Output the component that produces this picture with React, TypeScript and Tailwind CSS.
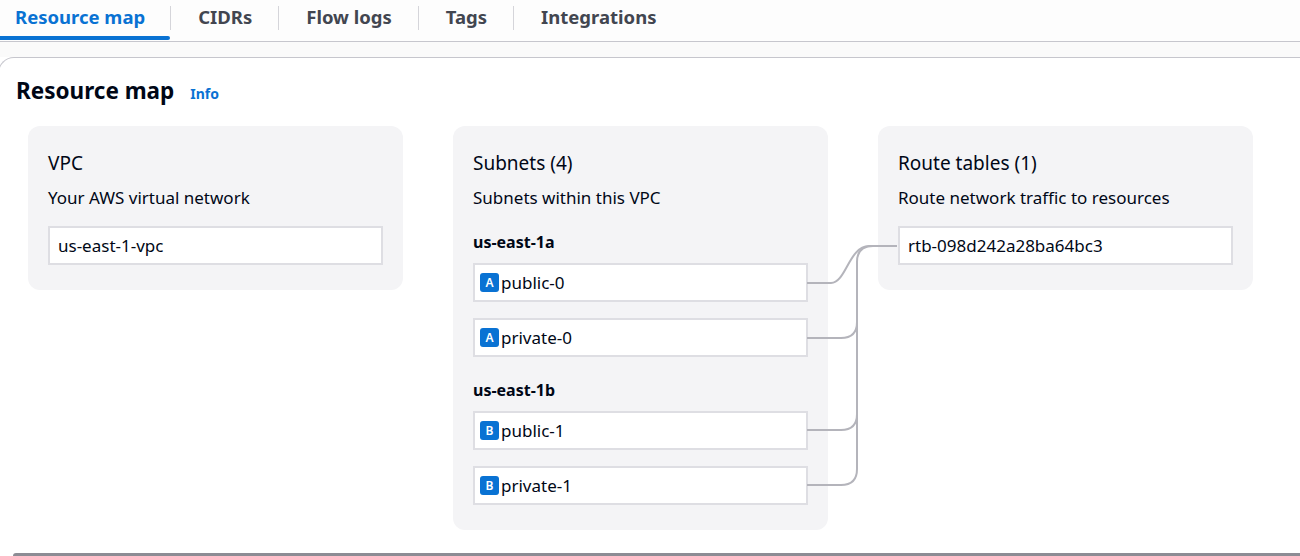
import * as React from 'react';

const tabs = ['Resource map', 'CIDRs', 'Flow logs', 'Tags', 'Integrations'];

const Badge = ({ letter }: { letter: string }) => (
  <span className="flex h-[19px] w-[19px] shrink-0 items-center justify-center rounded-[3px] bg-[#0972d3] text-[12px] font-semibold leading-none text-white">
    {letter}
  </span>
);

const Node = ({ label, badge }: { label: string; badge?: string }) => (
  <div className="flex h-[39px] w-[335px] items-center gap-[2px] border-2 border-[#dedee3] bg-white px-[5px] text-[17px] text-[#000716]">
    {badge && <Badge letter={badge} />}
    <span className={badge ? '' : 'pl-[3px]'}>{label}</span>
  </div>
);

const Card = ({
  title,
  desc,
  children,
}: {
  title: string;
  desc: string;
  children: React.ReactNode;
}) => (
  <div className="w-[375px] shrink-0 self-start rounded-[12px] bg-[#f4f4f6] px-[20px] pb-[25px] pt-[25px]">
    <div className="text-[19px] leading-[24px] text-[#000716]">{title}</div>
    <div className="mt-[12px] text-[17px] leading-[22px] text-[#000716]">{desc}</div>
    {children}
  </div>
);

export default function App() {
  return (
    <div className="relative h-[556px] w-[1300px] overflow-hidden bg-white font-['Noto_Sans',sans-serif]">
      {/* tabs */}
      <div className="flex h-[42px] items-start border-b border-[#c6c6cd] bg-[#fdfdfd]">
        {tabs.map((t, i) => (
          <div key={t} className="flex items-center">
            {i > 0 && <div className="mt-[6px] h-[24px] w-px self-start bg-[#d5d5da]" />}
            <div className={`relative pt-[4px] ${i === 0 ? 'pl-[15px] pr-[25px]' : 'pl-[27px] pr-[26px]'}`}>
              <span
                className={`text-[18.5px] font-bold leading-[26px] ${
                  i === 0 ? 'text-[#0972d3]' : 'text-[#424650]'
                }`}
              >
                {t}
              </span>
              {i === 0 && (
                <div className="absolute left-0 right-0 top-[36px] h-[4px] rounded-r-[3px] bg-[#0972d3]" />
              )}
            </div>
          </div>
        ))}
      </div>

      <div className="h-[15px] bg-[#fafafa]" />

      {/* container */}
      <div className="-ml-[2px] w-[1304px] rounded-tl-[16px] border-l border-t border-[#c6c6cd] bg-white">
        <div className="flex items-baseline gap-[16px] pl-[17px] pt-[18px]">
          <h2 className="text-[22.5px] font-bold leading-[30px] text-[#000716]">Resource map</h2>
          <span className="text-[14px] font-bold text-[#0972d3]">Info</span>
        </div>

        <div className="relative mt-[20px] flex gap-[50px] pl-[29px]">
          <Card title="VPC" desc="Your AWS virtual network">
            <div className="mt-[17px]">
              <Node label="us-east-1-vpc" />
            </div>
          </Card>

          <Card title="Subnets (4)" desc="Subnets within this VPC">
            <div className="mt-[22px] text-[16px] font-bold leading-[22px] text-[#000716]">us-east-1a</div>
            <div className="mt-[10px] flex flex-col gap-[16px]">
              <Node label="public-0" badge="A" />
              <Node label="private-0" badge="A" />
            </div>
            <div className="mt-[22px] text-[16px] font-bold leading-[22px] text-[#000716]">us-east-1b</div>
            <div className="mt-[10px] flex flex-col gap-[16px]">
              <Node label="public-1" badge="B" />
              <Node label="private-1" badge="B" />
            </div>
          </Card>

          <Card title="Route tables (1)" desc="Route network traffic to resources">
            <div className="mt-[17px]">
              <Node label="rtb-098d242a28ba64bc3" />
            </div>
          </Card>

          {/* connectors */}
          <svg
            className="pointer-events-none absolute left-0 top-0"
            width="1300"
            height="420"
            viewBox="0 126 1300 420"
            fill="none"
            stroke="#b4b4bb"
            strokeWidth="2"
          >
            <path d="M808 283 H832 C847 283 850 246 870 246 H898" />
            <path d="M898 246 H874 Q858 246 858 262 V469 Q858 485 842 485 H808" />
            <path d="M808 338 H842 Q858 338 858 322" />
            <path d="M808 430 H842 Q858 430 858 414" />
          </svg>
        </div>

        <div className="ml-[14px] mt-[23px] h-[6px] rounded-l-[3px] bg-[#8c8c94]" />
      </div>
    </div>
  );
}
